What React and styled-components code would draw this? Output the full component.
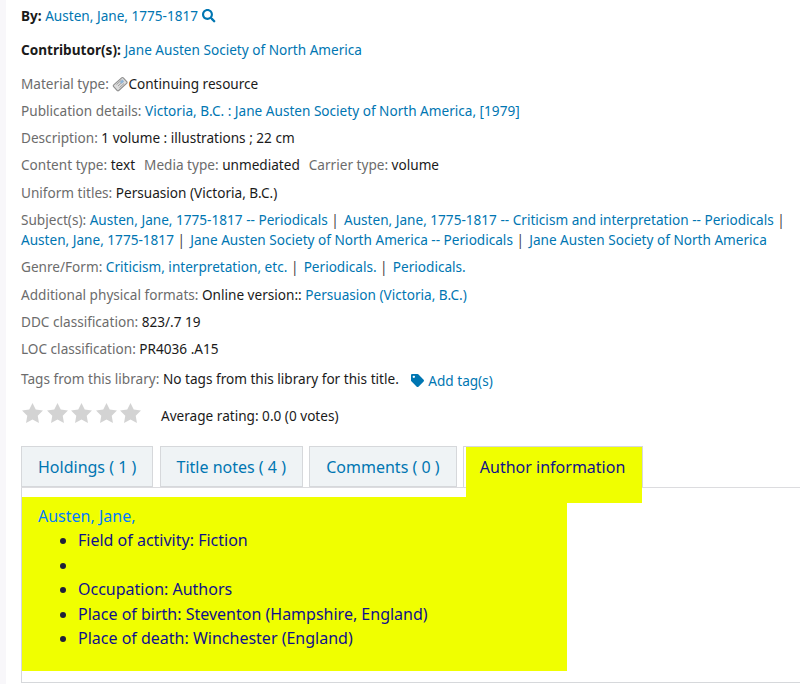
import React from "react";
import styled, { createGlobalStyle } from "styled-components";
import { FaSearch, FaTag } from "react-icons/fa";

const Global = createGlobalStyle`
  html, body { margin: 0; padding: 0; background: #fff; }
  body { font-family: "Noto Sans", sans-serif; font-size: 13.6px; line-height: 20.4px; color: #1a1a1a; }
`;

const Page = styled.div`
  width: 800px;
  height: 684px;
  overflow: hidden;
  display: flex;
  background: #fff;
`;
const Gutter = styled.div`
  width: 6px;
  flex: none;
  background: #f8f7fa;
`;
const Main = styled.div`
  flex: 1;
  min-width: 0;
  padding: 5.7px 0 0 15px;
`;
const A = styled.a`
  color: #0076b2;
  text-decoration: none;
`;
const Heading = styled.div`
  margin-bottom: 13.6px;
  white-space: nowrap;
  b { font-weight: 700; color: #1a1a1a; }
`;
const Row = styled.div`
  margin-bottom: ${(p) => p.$mb ?? 6.8}px;
  white-space: ${(p) => (p.$wrap ? "normal" : "nowrap")};
`;
const Label = styled.span`
  color: #6c6c6c;
`;
const Sep = styled.span`
  color: #444;
  margin-right: 1.7px;
`;
const Gap = styled.span`
  margin-left: 9px;
`;
const AddTag = styled.a`
  color: #0076b2;
  text-decoration: none;
  margin-left: 12.5px;
  position: relative;
  top: 2px;
`;
const SearchIcon = styled(FaSearch)`
  color: #0076b2;
  font-size: 13.5px;
  margin-left: 4px;
  vertical-align: -2px;
`;
const TagIcon = styled(FaTag)`
  color: #0076b2;
  font-size: 13px;
  margin-right: 4px;
  vertical-align: -1px;
`;
const MaterialIcon = styled.svg`
  width: 16px;
  height: 16px;
  vertical-align: -3px;
`;
const Rating = styled.div`
  display: flex;
  align-items: center;
  height: 28px;
  margin: 12.7px 0 16px;
`;
const Stars = styled.div`
  display: flex;
  width: 140px;
  margin-bottom: 4px;
`;
const StarIcon = styled.svg`
  width: 24.5px;
  height: 24px;
  flex: none;
`;
const Tabs = styled.div`
  display: flex;
  align-items: flex-start;
  height: 41px;
  border-bottom: 1px solid #dcdcdf;
`;
const Tab = styled.div`
  height: 41px;
  box-sizing: border-box;
  padding: 0 16px;
  margin-right: 6.3px;
  border: 1px solid #d6d8db;
  background: #eff3f5;
  color: #0076b2;
  font-size: 16px;
  line-height: 40px;
  white-space: nowrap;
`;
const ActiveTab = styled.div`
  height: 41px;
  box-sizing: border-box;
  padding-left: 2px;
  border: 1px solid #d6d8db;
  border-bottom: 0;
  background: #fff;
  position: relative;
  z-index: 1;
`;
const ActiveLabel = styled.div`
  height: 56px;
  padding: 0 17px 0 14px;
  background: #f0ff00;
  color: #10108c;
  font-size: 16px;
  line-height: 40px;
  white-space: nowrap;
`;
const Panel = styled.div`
  box-sizing: border-box;
  width: 779px;
  height: 195px;
  border-left: 1px solid #d6d8db;
  border-bottom: 1px solid #d6d8db;
  padding-top: 9px;
`;
const Yellow = styled.div`
  width: 545px;
  height: 174px;
  box-sizing: border-box;
  background: #f0ff00;
  padding: 6.7px 16px 0;
  font-size: 16px;
  line-height: 24.5px;
  color: #10108c;
`;
const AuthorLink = styled.a`
  color: #007bff;
  text-decoration: none;
`;
const List = styled.ul`
  margin: 0;
  padding: 0 0 0 40px;
  li::marker { color: #20203a; }
`;

const Serial = () => (
  <MaterialIcon viewBox="0 0 16 16">
    <rect x="1.5" y="4.5" width="13" height="7.5" rx="1.2" transform="rotate(-42 8 8)" fill="#dcdcdc" stroke="#8f8f8f" strokeWidth="1.1" />
    <path d="M4.5 8.5 L9.5 4 M6 10 L11 5.5 M7.5 11.5 L12 7.5" stroke="#9a9a9a" strokeWidth="0.9" />
    <rect x="8.5" y="4.5" width="3.4" height="2.6" transform="rotate(-42 10 6)" fill="#8fb4d6" />
  </MaterialIcon>
);
const Star = () => (
  <StarIcon viewBox="0 0 24.5 24">
    <path
      transform="translate(0.5 0.5)"
      d="M11 0.5 L14.23 7.05 L21.46 8.1 L16.23 13.2 L17.47 20.4 L11 17 L4.53 20.4 L5.77 13.2 L0.54 8.1 L7.77 7.05 Z"
      fill="#d3d3d3"
    />
  </StarIcon>
);

export default function App() {
  return (
    <Page>
      <Global />
      <Gutter />
      <Main>
        <Heading>
          <b>By:</b> <A href="#">Austen, Jane, 1775-1817</A><SearchIcon />
        </Heading>
        <Heading>
          <b>Contributor(s):</b> <A href="#">Jane Austen Society of North America</A>
        </Heading>
        <Row><Label>Material type: </Label><Serial />Continuing resource</Row>
        <Row><Label>Publication details: </Label><A href="#">Victoria, B.C. : Jane Austen Society of North America, [1979]</A></Row>
        <Row><Label>Description: </Label>1 volume : illustrations ; 22 cm</Row>
        <Row>
          <Label>Content type: </Label>text<Gap /><Label>Media type: </Label>unmediated<Gap /><Label>Carrier type: </Label>volume
        </Row>
        <Row><Label>Uniform titles: </Label>Persuasion (Victoria, B.C.)</Row>
        <Row $wrap>
          <Label>Subject(s): </Label><A href="#">Austen, Jane, 1775-1817 -- Periodicals</A> <Sep>|</Sep> <A href="#">Austen, Jane, 1775-1817 -- Criticism and interpretation -- Periodicals</A> <Sep>|</Sep> <A href="#">Austen, Jane, 1775-1817</A> <Sep>|</Sep> <A href="#">Jane Austen Society of North America -- Periodicals</A> <Sep>|</Sep> <A href="#">Jane Austen Society of North America</A>
        </Row>
        <Row>
          <Label>Genre/Form: </Label><A href="#">Criticism, interpretation, etc.</A> <Sep>|</Sep> <A href="#">Periodicals.</A> <Sep>|</Sep> <A href="#">Periodicals.</A>
        </Row>
        <Row><Label>Additional physical formats: </Label>Online version:: <A href="#">Persuasion (Victoria, B.C.)</A></Row>
        <Row><Label>DDC classification: </Label>823/.7 19</Row>
        <Row $mb={9.6}><Label>LOC classification: </Label>PR4036 .A15</Row>
        <Row $mb={0}>
          <Label>Tags from this library: </Label>No tags from this library for this title.
          <AddTag href="#"><TagIcon />Add tag(s)</AddTag>
        </Row>
        <Rating>
          <Stars><Star /><Star /><Star /><Star /><Star /></Stars>
          <span>Average rating: 0.0 (0 votes)</span>
        </Rating>
        <Tabs>
          <Tab>Holdings ( 1 )</Tab>
          <Tab>Title notes ( 4 )</Tab>
          <Tab>Comments ( 0 )</Tab>
          <ActiveTab><ActiveLabel>Author information</ActiveLabel></ActiveTab>
        </Tabs>
        <Panel>
          <Yellow>
            <AuthorLink href="#">Austen, Jane,</AuthorLink>
            <List>
              <li>Field of activity: Fiction</li>
              <li></li>
              <li>Occupation: Authors</li>
              <li>Place of birth: Steventon (Hampshire, England)</li>
              <li>Place of death: Winchester (England)</li>
            </List>
          </Yellow>
        </Panel>
      </Main>
    </Page>
  );
}
